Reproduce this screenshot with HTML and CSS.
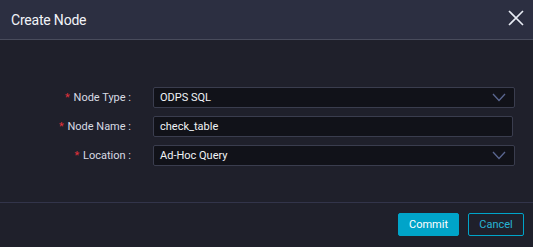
FILE: index.html
```html
<!DOCTYPE html>
<html lang="en">
<head>
  <title>Create Node</title>
  <link rel="stylesheet" href="styles.css">
</head>
<body>
  <div class="dialog">
    <div class="header">
      <span class="title">Create Node</span>
      <svg class="close" width="16" height="16" viewBox="0 0 16 16">
        <path d="M1 1 L15 15 M15 1 L1 15" stroke="#e8ecf4" stroke-width="1.6" fill="none"/>
      </svg>
    </div>

    <div class="body">
      <div class="row">
        <label class="label"><span class="req">*</span> Node Type :</label>
        <div class="field select">
          <span>ODPS SQL</span>
          <svg class="arrow" width="14" height="9" viewBox="0 0 14 9">
            <path d="M1 1 L7 7.5 L13 1" stroke="#5a6690" stroke-width="1.3" fill="none"/>
          </svg>
        </div>
      </div>
      <div class="row">
        <label class="label"><span class="req">*</span> Node Name :</label>
        <div class="field input"><span>check_table</span></div>
      </div>
      <div class="row">
        <label class="label"><span class="req">*</span> Location :</label>
        <div class="field select">
          <span>Ad-Hoc Query</span>
          <svg class="arrow" width="14" height="9" viewBox="0 0 14 9">
            <path d="M1 1 L7 7.5 L13 1" stroke="#5a6690" stroke-width="1.3" fill="none"/>
          </svg>
        </div>
      </div>
    </div>

    <div class="footer">
      <button class="btn primary">Commit</button>
      <button class="btn ghost">Cancel</button>
    </div>
  </div>
</body>
</html>
```

FILE: styles.css
```css
html, body {
  margin: 0;
  padding: 0;
  width: 533px;
  height: 247px;
  background: #1f202b;
  font-family: Roboto, "Liberation Sans", sans-serif;
  overflow: hidden;
}

.dialog {
  width: 533px;
  height: 247px;
  display: flex;
  flex-direction: column;
}

.header {
  height: 39px;
  background: #2c2f41;
  border-bottom: 1px solid #494c5c;
  display: flex;
  align-items: center;
  justify-content: space-between;
  padding: 0 9px 0 11px;
  box-sizing: content-box;
}

.title {
  color: #f2f4f8;
  font-size: 14px;
  letter-spacing: -0.2px;
}

.close {
  margin-top: -4px;
}

.body {
  height: 163px;
  border-bottom: 1px solid #32344a;
  padding-top: 47px;
  box-sizing: border-box;
  display: flex;
  flex-direction: column;
  gap: 8px;
}

.row {
  display: flex;
  align-items: center;
}

.label {
  width: 153px;
  text-align: right;
  color: #d8dbe4;
  font-size: 11px;
  padding-right: 22px;
  box-sizing: border-box;
  flex-shrink: 0;
}

.req {
  color: #e0313b;
  margin-right: 1px;
}

.field {
  width: 362px;
  height: 21px;
  box-sizing: border-box;
  background: #111219;
  border: 1px solid #3a3d4e;
  border-radius: 2px;
  display: flex;
  align-items: center;
  justify-content: space-between;
  padding: 0 6px 0 6px;
  color: #f0f2f6;
  font-size: 11px;
}

.input {
  width: 360px;
}

.arrow {
  margin-right: 2px;
}

.footer {
  flex: 1;
  display: flex;
  justify-content: flex-end;
  align-items: center;
  gap: 9px;
  padding: 0 9px 2px 0;
}

.btn {
  height: 23px;
  font-family: Roboto, "Liberation Sans", sans-serif;
  font-size: 11px;
  border-radius: 2px;
  box-sizing: border-box;
  cursor: pointer;
}

.primary {
  width: 61px;
  background: #00a4c9;
  border: 1px solid #00a4c9;
  color: #ffffff;
}

.ghost {
  width: 56px;
  background: transparent;
  border: 1px solid #00a4c9;
  color: #27b4d4;
}
```
